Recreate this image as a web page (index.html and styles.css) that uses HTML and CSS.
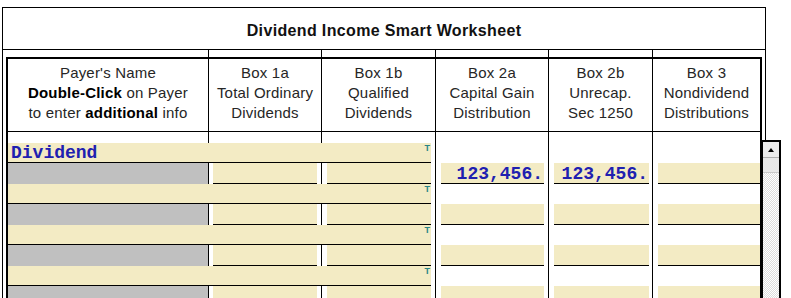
FILE: index.html
```html
<!DOCTYPE html>
<html>
<head>
<meta charset="utf-8">
<link rel="stylesheet" href="styles.css">
</head>
<body>
<div class="sheet">
  <div class="title">Dividend Income Smart Worksheet</div>
  <div class="stub cols"><span></span><span></span><span></span><span></span><span></span><span></span></div>
  <div class="frame">
    <div class="head cols">
      <div class="hc">Payer's Name<br><b>Double-Click</b> on Payer<br>to enter <b>additional</b> info</div>
      <div class="hc">Box 1a<br>Total Ordinary<br>Dividends</div>
      <div class="hc">Box 1b<br>Qualified<br>Dividends</div>
      <div class="hc">Box 2a<br>Capital Gain<br>Distribution</div>
      <div class="hc">Box 2b<br>Unrecap.<br>Sec 1250</div>
      <div class="hc">Box 3<br>Nondividend<br>Distributions</div>
    </div>
    <div class="gap cols"><span></span><span></span><span></span><span></span><span></span><span></span></div>

    <div class="nrow cols">
      <div class="ncell"><div class="nfield"><span class="ntext">Dividend</span><span class="tmark">T</span></div></div>
      <span></span><span></span><span></span>
    </div>
    <div class="arow cols">
      <div class="gray"></div>
      <div class="ac c1"><div class="field"></div></div>
      <div class="ac c2"><div class="field"></div></div>
      <div class="ac c3"><div class="field">123,456.</div></div>
      <div class="ac c4"><div class="field">123,456.</div></div>
      <div class="ac c5"><div class="field"></div></div>
    </div>

    <div class="nrow cols">
      <div class="ncell"><div class="nfield"><span class="ntext"></span><span class="tmark">T</span></div></div>
      <span></span><span></span><span></span>
    </div>
    <div class="arow cols">
      <div class="gray"></div>
      <div class="ac c1"><div class="field"></div></div>
      <div class="ac c2"><div class="field"></div></div>
      <div class="ac c3"><div class="field"></div></div>
      <div class="ac c4"><div class="field"></div></div>
      <div class="ac c5"><div class="field"></div></div>
    </div>

    <div class="nrow cols">
      <div class="ncell"><div class="nfield"><span class="ntext"></span><span class="tmark">T</span></div></div>
      <span></span><span></span><span></span>
    </div>
    <div class="arow cols">
      <div class="gray"></div>
      <div class="ac c1"><div class="field"></div></div>
      <div class="ac c2"><div class="field"></div></div>
      <div class="ac c3"><div class="field"></div></div>
      <div class="ac c4"><div class="field"></div></div>
      <div class="ac c5"><div class="field"></div></div>
    </div>

    <div class="nrow cols">
      <div class="ncell"><div class="nfield"><span class="ntext"></span><span class="tmark">T</span></div></div>
      <span></span><span></span><span></span>
    </div>
    <div class="arow cols">
      <div class="gray"></div>
      <div class="ac c1"><div class="field"></div></div>
      <div class="ac c2"><div class="field"></div></div>
      <div class="ac c3"><div class="field"></div></div>
      <div class="ac c4"><div class="field"></div></div>
      <div class="ac c5"><div class="field"></div></div>
    </div>
  </div>
</div>
<div class="sb">
  <div class="sb-up"><span class="sb-arrow"></span></div>
  <div class="sb-thumb"></div>
</div>
</body>
</html>
```
FILE: styles.css
```css
* { box-sizing: border-box; }
html, body {
  margin: 0;
  height: 298px;
  overflow: hidden;
  background: #fff;
}
body {
  position: relative;
  font-family: "Liberation Sans", Arial, sans-serif;
  color: #1a1a1a;
}
.sheet {
  margin: 7px 0 0 2px;
  width: 764px;
  border: 1px solid #000;
  border-bottom: none;
}
.title {
  height: 42px;
  padding-top: 4px;
  line-height: 37px;
  border-bottom: 1px solid #000;
  text-align: center;
  font-weight: bold;
  font-size: 16px;
  letter-spacing: 0.35px;
  color: #111;
}
.cols {
  display: grid;
  grid-template-columns: 201px 113px 114px 113px 104px 107px;
}
.cols > * { border-right: 1px solid #000; }
.cols > :last-child { border-right: none; }
.stub {
  height: 7px;
  margin: 0 5px;
}
.frame {
  margin: 0 3px;
  border: 2px solid #000;
  border-bottom: none;
}
.head {
  height: 73px;
  border-bottom: 1px solid #000;
}
.hc {
  padding-top: 4px;
  text-align: center;
  font-size: 15px;
  line-height: 20px;
  letter-spacing: 0.2px;
  color: #262626;
}
.hc b { color: #000; }
.gap { height: 11px; }
.nrow { height: 20px; }
.ncell {
  grid-column: span 3;
  padding-right: 4px;
}
.nfield {
  height: 20px;
  background: #f3ebc4;
  border-bottom: 1px solid #000;
  display: flex;
  justify-content: space-between;
  align-items: flex-start;
  padding: 0 1px 0 3px;
}
.ntext {
  padding-top: 1px;
  font-family: "Courier New", "Nimbus Mono PS", "FreeMono", "Liberation Mono", monospace;
  font-weight: bold;
  font-size: 18px;
  line-height: 19px;
  color: #2020b0;
}
.tmark {
  font-size: 9px;
  line-height: 9px;
  margin-top: 1px;
  font-weight: bold;
  color: #2a8586;
}
.arow { height: 21px; }
.gray { background: #c0c0c0; }
.ac { padding: 0 4px 0 5px; }
.c1 { padding-left: 4px; }
.c4 { padding-right: 3px; }
.c5 { padding-right: 0; }
.field {
  height: 21px;
  background: #f3ebc4;
  border-bottom: 1px solid #000;
  text-align: right;
  padding: 2px 1px 0 0;
  font-family: "Courier New", "Nimbus Mono PS", "FreeMono", "Liberation Mono", monospace;
  font-weight: bold;
  font-size: 18px;
  line-height: 18px;
  color: #2020b0;
}
.sb {
  position: absolute;
  left: 761px;
  top: 140px;
  width: 20px;
  height: 158px;
  border: 2px solid #000;
  border-bottom: none;
  background: repeating-conic-gradient(#ffffff 0 25%, #dcdcdc 0 50%) 0 0 / 2px 2px;
}
.sb-up {
  height: 16px;
  background: #ececec;
  border-bottom: 1px solid #b0b0b0;
  display: flex;
  align-items: center;
  justify-content: center;
}
.sb-arrow {
  width: 0;
  height: 0;
  border-left: 3px solid transparent;
  border-right: 3px solid transparent;
  border-bottom: 4px solid #000;
}
.sb-thumb {
  height: 15px;
  background: #e8e8e8;
  border-bottom: 1px solid #c8c8c8;
}
```
